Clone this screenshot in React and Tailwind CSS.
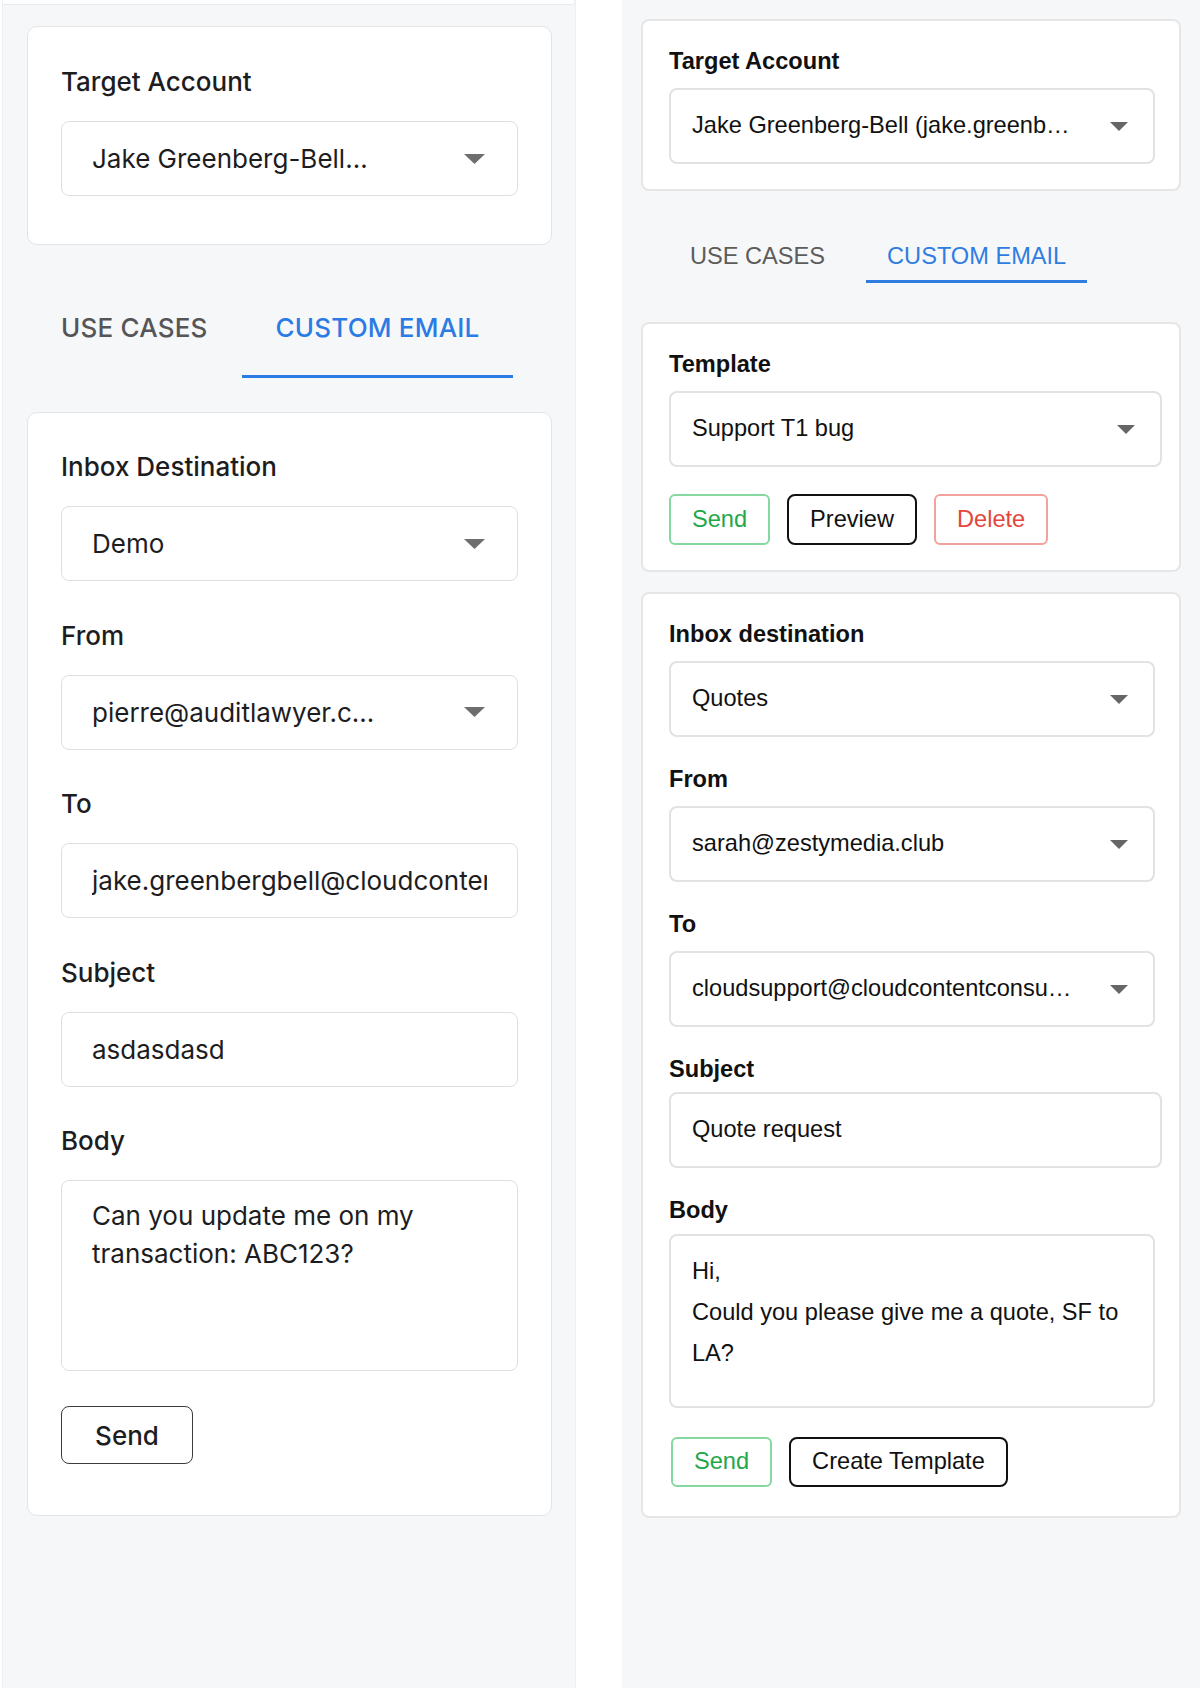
import React from "react";

function LArrow() {
  return (
    <svg width="21" height="10" viewBox="0 0 21 10" className="shrink-0">
      <polygon points="0,0 21,0 10.5,10" fill="#6e6e6e" />
    </svg>
  );
}

function RArrow() {
  return (
    <svg width="18" height="9" viewBox="0 0 18 9" className="shrink-0">
      <polygon points="0,0 18,0 9,9" fill="#666666" />
    </svg>
  );
}

function LSelect({ text }) {
  return (
    <div className="h-[75px] rounded-[8px] border border-[#dfdfdf] bg-white flex items-center pl-[30px] pr-[32px]">
      <span className="flex-1 text-[26px] text-[#1d1d1f] whitespace-nowrap">{text}</span>
      <LArrow />
    </div>
  );
}

function LInput({ text }) {
  return (
    <div className="h-[75px] rounded-[8px] border border-[#dfdfdf] bg-white flex items-center px-[30px]">
      <div className="overflow-hidden whitespace-nowrap text-[26px] text-[#1d1d1f] w-full">{text}</div>
    </div>
  );
}

function LField({ label, children }) {
  return (
    <div>
      <div className="text-[26px] leading-[36px] font-medium text-[#1d1d1f]">{label}</div>
      <div className="mt-[21px]">{children}</div>
    </div>
  );
}

function RSelect({ text, wide }) {
  return (
    <div
      className={
        "h-[76px] rounded-[8px] border-2 border-[#e2e2e2] bg-white flex items-center pl-[21px] pr-[25px] " +
        (wide ? "w-[493px]" : "w-[486px]")
      }
    >
      <span className="flex-1 text-[23.6px] text-[#111] whitespace-nowrap overflow-hidden">{text}</span>
      <RArrow />
    </div>
  );
}

function RLabel({ children }) {
  return <div className="text-[23.6px] leading-[28px] font-bold text-[#111]">{children}</div>;
}

export default function App() {
  return (
    <div className="w-[1200px] h-[1688px] bg-white flex">
      {/* LEFT */}
      <div className="font-['Inter',sans-serif] ml-[2px] w-[574px] h-full bg-[#f6f7f9] border-r border-[#eeeff1] border-l border-l-[#eeeff1]">
        <div className="h-[5px] bg-white border-b border-[#e9eaec] mr-[2px]" />
        <div className="pl-[24px] pr-[22px] pt-[21px]">
          <div className="w-[525px] rounded-[10px] border border-[#e3e4e6] bg-white px-[33px] pt-[37px] pb-[48px]">
            <LField label="Target Account">
              <LSelect text="Jake Greenberg-Bell…" />
            </LField>
          </div>

          <div className="flex mt-[33px]">
            <div className="h-[100px] px-[34px] pt-[32px] text-[26px] leading-[36px] font-medium text-[#555558] tracking-[0.2px]">
              USE CASES
            </div>
            <div className="h-[100px] px-[34px] pt-[32px] text-[26px] leading-[36px] font-medium text-[#2b7be4] border-b-[3px] border-[#2b7be4] tracking-[0.2px]">
              CUSTOM EMAIL
            </div>
          </div>

          <div className="mt-[34px] w-[525px] rounded-[10px] border border-[#e3e4e6] bg-white px-[33px] pt-[36px] pb-[51px]">
            <div className="flex flex-col gap-[36.5px]">
              <LField label="Inbox Destination">
                <LSelect text="Demo" />
              </LField>
              <LField label="From">
                <LSelect text="pierre@auditlawyer.c…" />
              </LField>
              <LField label="To">
                <LInput text="jake.greenbergbell@cloudcontentconsulting.com" />
              </LField>
              <LField label="Subject">
                <LInput text="asdasdasd" />
              </LField>
              <LField label="Body">
                <div className="h-[191px] rounded-[8px] border border-[#dfdfdf] bg-white px-[30px] pt-[16px]">
                  <div className="text-[26px] leading-[38px] text-[#1d1d1f]">Can you update me on my transaction: ABC123?</div>
                </div>
              </LField>
            </div>
            <div className="mt-[35px] w-[132px] h-[58px] rounded-[8px] border-[1.5px] border-[#3c3c3c] flex items-center justify-center text-[26px] font-medium text-[#1d1d1f]">
              Send
            </div>
          </div>
        </div>
      </div>

      {/* GAP */}
      <div className="w-[46px] h-full bg-white" />

      {/* RIGHT */}
      <div className="font-['Liberation_Sans',Arial,sans-serif] flex-1 h-full bg-[#f6f7f9] pl-[19px] pt-[19px]">
        <div className="w-[540px] rounded-[8px] border-2 border-[#e6e6e6] bg-white pt-[26px] pb-[25px] pl-[26px]">
          <RLabel>Target Account</RLabel>
          <div className="mt-[13px]">
            <RSelect text="Jake Greenberg-Bell (jake.greenb…" />
          </div>
        </div>

        <div className="flex ml-[28px] mt-[39px] gap-[20px]">
          <div className="pt-[12px] pb-[13px] px-[21px] text-[23.6px] leading-[28px] text-[#5c5c5c]">USE CASES</div>
          <div className="pt-[12px] pb-[10px] px-[21px] text-[23.6px] leading-[28px] text-[#2f7de1] border-b-[3px] border-[#2f7de1]">
            CUSTOM EMAIL
          </div>
        </div>

        <div className="mt-[39px] w-[540px] rounded-[8px] border-2 border-[#e6e6e6] bg-white pt-[26px] pb-[25px] pl-[26px]">
          <RLabel>Template</RLabel>
          <div className="mt-[13px]">
            <RSelect text="Support T1 bug" wide />
          </div>
          <div className="mt-[27px] flex gap-[17px] text-[23.6px]">
            <div className="h-[51px] px-[21px] rounded-[6px] border-2 border-[#86d7a0] text-[#22a84a] flex items-center">Send</div>
            <div className="h-[51px] px-[21px] rounded-[8px] border-2 border-[#111] text-[#111] flex items-center">Preview</div>
            <div className="h-[51px] px-[21px] rounded-[6px] border-2 border-[#f3a19c] text-[#e5453b] flex items-center">Delete</div>
          </div>
        </div>

        <div className="mt-[20px] w-[540px] rounded-[8px] border-2 border-[#e6e6e6] bg-white pt-[26px] pb-[29px] pl-[26px]">
          <div className="flex flex-col gap-[28px]">
            <div>
              <RLabel>Inbox destination</RLabel>
              <div className="mt-[13px]">
                <RSelect text="Quotes" />
              </div>
            </div>
            <div>
              <RLabel>From</RLabel>
              <div className="mt-[13px]">
                <RSelect text="sarah@zestymedia.club" />
              </div>
            </div>
            <div>
              <RLabel>To</RLabel>
              <div className="mt-[13px]">
                <RSelect text="cloudsupport@cloudcontentconsu…" />
              </div>
            </div>
            <div>
              <RLabel>Subject</RLabel>
              <div className="mt-[9px] w-[493px] h-[76px] rounded-[8px] border-2 border-[#e2e2e2] bg-white flex items-center pl-[21px] text-[23.6px] text-[#111]">
                Quote request
              </div>
            </div>
            <div>
              <RLabel>Body</RLabel>
              <div className="mt-[10px] w-[486px] h-[174px] rounded-[8px] border-2 border-[#e2e2e2] bg-white pl-[21px] pt-[15px] text-[23.6px] leading-[41px] text-[#111]">
                <div>Hi,</div>
                <div>Could you please give me a quote, SF to</div>
                <div>LA?</div>
              </div>
            </div>
          </div>
          <div className="mt-[29px] ml-[2px] flex gap-[17px] text-[23.6px]">
            <div className="h-[50px] px-[21px] rounded-[6px] border-2 border-[#86d7a0] text-[#22a84a] flex items-center">Send</div>
            <div className="h-[50px] px-[21px] rounded-[8px] border-2 border-[#111] text-[#111] flex items-center">Create Template</div>
          </div>
        </div>
      </div>
    </div>
  );
}
